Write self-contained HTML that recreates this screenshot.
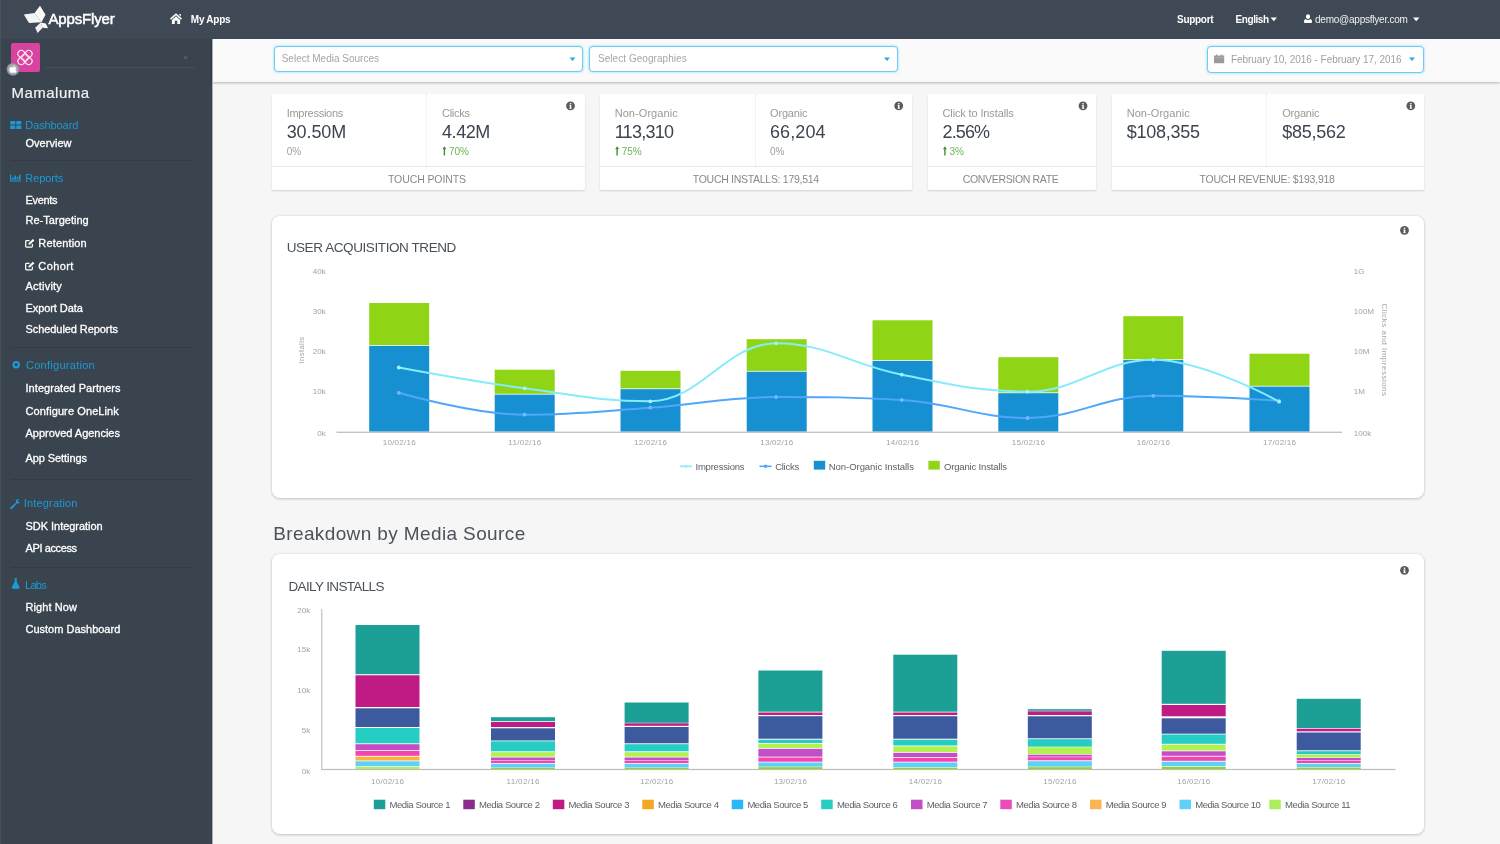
<!DOCTYPE html>
<html lang="en">
<head>
<meta charset="utf-8">
<title>AppsFlyer Dashboard - Mamaluma Overview</title>
<meta name="viewport" content="width=1500, initial-scale=1">
<style>
*{box-sizing:border-box;margin:0;padding:0}
html,body{width:1500px;height:844px;overflow:hidden;background:#f6f6f6}
body{font-family:"Liberation Sans",sans-serif;-webkit-font-smoothing:antialiased}
#app{will-change:transform;position:relative;width:1500px;height:844px;overflow:hidden;background:#f6f6f6}
#app div,#app header,#app aside,#app main,#app section,#app nav,#app ul,#app li,#app a,#app h1,#app h2,#app h3{position:absolute;display:block;list-style:none;text-decoration:none;font-weight:400}
.t{position:absolute;white-space:nowrap;display:block}
.i{position:absolute;display:block;overflow:visible}
.card{background:#fff;border-radius:1.5px;box-shadow:0 1px 2px rgba(0,0,0,.15)}
.panel{background:#fff;border-radius:7.5px;box-shadow:0 1px 3px rgba(0,0,0,.2),0 0 2px rgba(0,0,0,.1)}
.sel{background:#fff;border:1px solid #6dcdf3;border-radius:4px;box-shadow:0 0 2.5px rgba(90,200,245,.8)}
</style>
</head>
<body>
<div id="app">
<header style="left:0;top:0;width:1500px;height:39px;background:#3f4955">
<svg class="i" style="left:0px;top:0px;" width="60" height="39" viewBox="0 0 60 39" aria-hidden="true"><g fill="#fff">
<polygon points="34.6,13 40,5.8 45.5,14.8 41.5,22.2" opacity=".98"/>
<polygon points="23.8,14.5 34.6,13 41.5,22.2 29,23" opacity=".94"/>
<polygon points="40.6,22.6 45.8,23.4 48,28.2 42.6,27.8" opacity=".96"/>
<polygon points="35.2,27.8 40.6,22.6 42.6,27.8 37.6,33" opacity=".92"/>
</g></svg>
<a class="t logo" href="#" style="left:48.4px;top:10px;font-size:15px;line-height:18px;color:#fff;letter-spacing:-0.14px;-webkit-text-stroke:0.5px #fff;">AppsFlyer</a>
<svg class="i" style="left:170px;top:13px;" width="12" height="11" viewBox="0 0 12 11" aria-hidden="true"><path fill="#fff" d="M6 0.3 L12 5.6 L11 6.7 L6 2.3 L1 6.7 L0 5.6 Z M9.2 1 h1.6 v2.5 l-1.6 -1.4 Z M1.9 6.9 L6 3.3 L10.1 6.9 V11 H7.2 V7.8 H4.8 V11 H1.9 Z"/></svg>
<a class="t" href="#" style="left:190.8px;top:14px;font-size:10px;line-height:12px;color:#fff;letter-spacing:-0.25px;font-weight:700;">My Apps</a>
<a class="t" href="#" style="left:1177px;top:14px;font-size:10px;line-height:12px;color:#fff;letter-spacing:-0.29px;font-weight:700;">Support</a>
<a class="t" href="#" style="left:1235.6px;top:14px;font-size:10px;line-height:12px;color:#fff;letter-spacing:-0.45px;font-weight:700;">English</a>
<svg class="i" style="left:1270px;top:17px;" width="7" height="5" viewBox="0 0 7 5" aria-hidden="true"><g transform="translate(0.6 0.6)"><path fill="#fff" d="M0 0 H6.4 L3.2 3.6 Z"/></g></svg>
<svg class="i" style="left:1304px;top:14px;" width="8" height="9" viewBox="0 0 8 9" aria-hidden="true"><g transform="translate(0 0.3)"><path fill="#fff" d="M4 0 C5.3 0 6.1 1 6.1 2.3 C6.1 3.6 5.2 4.8 4 4.8 C2.8 4.8 1.9 3.6 1.9 2.3 C1.9 1 2.7 0 4 0 Z M1.7 4.7 C2.3 5.3 3.1 5.7 4 5.7 C4.9 5.7 5.7 5.3 6.3 4.7 C7.6 5 8 6.3 8 7.6 C8 8.3 7.5 8.7 6.9 8.7 H1.1 C0.5 8.7 0 8.3 0 7.6 C0 6.3 0.4 5 1.7 4.7 Z"/></g></svg>
<a class="t" href="#" style="left:1315px;top:14px;font-size:10px;line-height:12px;color:#eef0f2;letter-spacing:-0.23px;">demo@appsflyer.com</a>
<svg class="i" style="left:1413px;top:17px;" width="7" height="5" viewBox="0 0 7 5" aria-hidden="true"><g transform="translate(0 0.6)"><path fill="#fff" d="M0 0 H6.4 L3.2 3.6 Z"/></g></svg>
</header>
<aside style="left:0;top:39px;width:212px;height:805px;background:#3a444f">
<div style="left:11px;top:4px;width:28.6px;height:29px;background:#d8439f;border-radius:2px"></div>
<svg class="i" style="left:17px;top:10px;" width="16" height="17" viewBox="0 0 16 17" aria-hidden="true"><g transform="translate(0 0.5)"><g fill="none" stroke="#fff" stroke-width="1.15" opacity=".93">
<rect x="-8.6" y="-3.3" width="17.2" height="6.6" rx="3.3" transform="translate(8,8) rotate(45)"/>
<rect x="-8.6" y="-3.3" width="17.2" height="6.6" rx="3.3" transform="translate(8,8) rotate(-45)"/>
<rect x="-2.3" y="-2.3" width="4.6" height="4.6" transform="translate(8,8) rotate(45)" stroke-width=".9"/>
</g></g></svg>
<svg class="i" style="left:6px;top:23px;" width="14" height="15" viewBox="0 0 14 15" aria-hidden="true"><g transform="translate(0 0.3)"><circle cx="7" cy="7" r="6.4" fill="#8d9094"/><circle cx="7" cy="7" r="5.2" fill="#a9acaf"/>
<path fill="#fff" d="M7.1 4.6 C7.1 3.7 7.8 3 8.6 2.9 C8.7 3.8 7.9 4.6 7.1 4.6 Z M5.4 4.7 C6.1 4.7 6.5 5.1 7 5.1 C7.5 5.1 8 4.7 8.8 4.7 C9.4 4.7 10 5 10.4 5.6 C9.2 6.3 9.4 8.1 10.6 8.6 C10.3 9.4 9.6 10.7 8.8 10.7 C8.2 10.7 8 10.3 7.2 10.3 C6.4 10.3 6.2 10.7 5.6 10.7 C4.6 10.7 3.4 8.8 3.4 7.1 C3.4 5.6 4.4 4.7 5.4 4.7 Z"/></g></svg>
<div style="left:46px;top:28px;width:148px;height:1px;background:#47525e"></div>
<svg class="i" style="left:183px;top:17px;" width="5" height="4" viewBox="0 0 5 4" aria-hidden="true"><g transform="translate(0 0.5)"><path fill="#56616d" d="M0 0 H5 L2.5 3 Z"/></g></svg>
<h1 class="t" style="left:11.6px;top:45px;font-size:15px;line-height:18px;color:#f1f2f3;letter-spacing:0.46px;-webkit-text-stroke:0.2px #f1f2f3;">Mamaluma</h1>
<nav style="left:0;top:0;width:212px;height:805px">
<svg class="i" style="left:10px;top:82px;" width="12" height="8" viewBox="0 0 12 8" aria-hidden="true"><g transform="translate(0.3 0)"><g fill="#1c9ad6"><rect x="0" y="0" width="5" height="3.5"/><rect x="6" y="0" width="5" height="3.5"/><rect x="0" y="4.5" width="5" height="3.5"/><rect x="6" y="4.5" width="5" height="3.5"/></g></g></svg>
<h3 class="t" style="left:25.3px;top:80px;font-size:11px;line-height:13px;color:#1c9ad6;letter-spacing:-0.1px;">Dashboard</h3>
<a class="t" href="#" style="left:25.5px;top:98px;font-size:11px;line-height:13px;color:#fff;letter-spacing:0.02px;-webkit-text-stroke:0.3px #fff;">Overview</a>
<div style="left:11px;top:120.5px;width:181px;height:1px;background:#333c46"></div>
<svg class="i" style="left:10px;top:135px;" width="11" height="8" viewBox="0 0 11 8" aria-hidden="true"><g transform="translate(0 0.2)"><path fill="#1c9ad6" d="M0 0 H1.2 V6.3 H11 V7.4 H0 Z M2.1 5.6 V3.2 H3.7 V5.6 Z M4.4 5.6 V1.4 H6 V5.6 Z M6.7 5.6 V2.5 H8.3 V5.6 Z M9 5.6 V0.6 H10.6 V5.6 Z"/></g></svg>
<h3 class="t" style="left:25.3px;top:133px;font-size:11px;line-height:13px;color:#1c9ad6;letter-spacing:-0.09px;">Reports</h3>
<a class="t" href="#" style="left:25.5px;top:155px;font-size:11px;line-height:13px;color:#fff;letter-spacing:-0.33px;-webkit-text-stroke:0.3px #fff;">Events</a>
<a class="t" href="#" style="left:25.5px;top:175px;font-size:11px;line-height:13px;color:#fff;letter-spacing:0.02px;-webkit-text-stroke:0.3px #fff;">Re-Targeting</a>
<svg class="i" style="left:25px;top:199px;" width="10" height="10" viewBox="0 0 10 10" aria-hidden="true"><g transform="translate(0 0.7)"><g fill="none" stroke="#fff"><path stroke-width="1.25" d="M7.4 5.2 V7.6 Q7.4 8.4 6.6 8.4 H1.5 Q0.7 8.4 0.7 7.6 V2.7 Q0.7 1.9 1.5 1.9 H4.6"/><path d="M3.3 6 L3.7 4.2 L7.9 0.3 L9.4 1.8 L5.2 5.7 Z" fill="#fff" stroke="none"/></g></g></svg>
<a class="t" href="#" style="left:38.3px;top:198px;font-size:11px;line-height:13px;color:#fff;letter-spacing:0.16px;-webkit-text-stroke:0.3px #fff;">Retention</a>
<svg class="i" style="left:25px;top:222px;" width="10" height="10" viewBox="0 0 10 10" aria-hidden="true"><g transform="translate(0 0.5)"><g fill="none" stroke="#fff"><path stroke-width="1.25" d="M7.4 5.2 V7.6 Q7.4 8.4 6.6 8.4 H1.5 Q0.7 8.4 0.7 7.6 V2.7 Q0.7 1.9 1.5 1.9 H4.6"/><path d="M3.3 6 L3.7 4.2 L7.9 0.3 L9.4 1.8 L5.2 5.7 Z" fill="#fff" stroke="none"/></g></g></svg>
<a class="t" href="#" style="left:38.3px;top:221px;font-size:11px;line-height:13px;color:#fff;letter-spacing:0.4px;-webkit-text-stroke:0.3px #fff;">Cohort</a>
<a class="t" href="#" style="left:25.5px;top:241px;font-size:11px;line-height:13px;color:#fff;letter-spacing:0.21px;-webkit-text-stroke:0.3px #fff;">Activity</a>
<a class="t" href="#" style="left:25.5px;top:263px;font-size:11px;line-height:13px;color:#fff;letter-spacing:-0.08px;-webkit-text-stroke:0.3px #fff;">Export Data</a>
<a class="t" href="#" style="left:25.5px;top:284px;font-size:11px;line-height:13px;color:#fff;letter-spacing:-0.07px;-webkit-text-stroke:0.3px #fff;">Scheduled Reports</a>
<div style="left:11px;top:308px;width:181px;height:1px;background:#333c46"></div>
<svg class="i" style="left:12px;top:321px;" width="8" height="9" viewBox="0 0 8 9" aria-hidden="true"><g transform="translate(0.4 0.9)"><circle cx="3.8" cy="3.8" r="2.7" fill="none" stroke="#1c9ad6" stroke-width="2.1"/></g></svg>
<h3 class="t" style="left:26px;top:320px;font-size:11px;line-height:13px;color:#1c9ad6;letter-spacing:0.27px;">Configuration</h3>
<a class="t" href="#" style="left:25.5px;top:343px;font-size:11px;line-height:13px;color:#fff;letter-spacing:0.05px;-webkit-text-stroke:0.3px #fff;">Integrated Partners</a>
<a class="t" href="#" style="left:25.5px;top:366px;font-size:11px;line-height:13px;color:#fff;letter-spacing:0.1px;-webkit-text-stroke:0.3px #fff;">Configure OneLink</a>
<a class="t" href="#" style="left:25.5px;top:388px;font-size:11px;line-height:13px;color:#fff;letter-spacing:-0.02px;-webkit-text-stroke:0.3px #fff;">Approved Agencies</a>
<a class="t" href="#" style="left:25.5px;top:413px;font-size:11px;line-height:13px;color:#fff;letter-spacing:-0.08px;-webkit-text-stroke:0.3px #fff;">App Settings</a>
<div style="left:11px;top:440px;width:181px;height:1px;background:#333c46"></div>
<svg class="i" style="left:10px;top:460px;" width="11" height="11" viewBox="0 0 11 11" aria-hidden="true"><g transform="translate(0.2 0)"><path fill="#1c9ad6" d="M9 0.2 C7.4 -0.3 5.8 0.8 5.7 2.5 C5.7 2.9 5.7 3.2 5.9 3.6 L0.4 8.3 C-0.1 8.8 -0.1 9.5 0.3 9.9 C0.7 10.3 1.4 10.3 1.9 9.8 L6.6 4.4 C7.9 4.9 9.6 4.2 9.9 2.6 L8.3 3.2 L7.2 2.1 Z"/></g></svg>
<h3 class="t" style="left:23.7px;top:458px;font-size:11px;line-height:13px;color:#1c9ad6;letter-spacing:0.18px;">Integration</h3>
<a class="t" href="#" style="left:25.5px;top:481px;font-size:11px;line-height:13px;color:#fff;letter-spacing:-0.03px;-webkit-text-stroke:0.3px #fff;">SDK Integration</a>
<a class="t" href="#" style="left:25.5px;top:503px;font-size:11px;line-height:13px;color:#fff;letter-spacing:-0.39px;-webkit-text-stroke:0.3px #fff;">API access</a>
<div style="left:11px;top:527.5px;width:181px;height:1px;background:#333c46"></div>
<svg class="i" style="left:11px;top:539px;" width="9" height="11" viewBox="0 0 9 11" aria-hidden="true"><g transform="translate(0.7 0.2)"><path fill="#1c9ad6" d="M2.6 0 H5.4 V0.9 H5 V3.4 L7.8 8.9 C8.2 9.7 7.7 10.5 6.8 10.5 H1.2 C0.3 10.5 -0.2 9.7 0.2 8.9 L3 3.4 V0.9 H2.6 Z"/></g></svg>
<h3 class="t" style="left:25px;top:540px;font-size:11px;line-height:13px;color:#1c9ad6;letter-spacing:-0.72px;">Labs</h3>
<a class="t" href="#" style="left:25.5px;top:562px;font-size:11px;line-height:13px;color:#fff;letter-spacing:0.09px;-webkit-text-stroke:0.3px #fff;">Right Now</a>
<a class="t" href="#" style="left:25.5px;top:584px;font-size:11px;line-height:13px;color:#fff;-webkit-text-stroke:0.3px #fff;">Custom Dashboard</a>
</nav>
</aside>
<div class="filters" style="left:212px;top:39px;width:1288px;height:43px;background:#fafafa;box-shadow:0 1px 2.5px rgba(0,0,0,.27)">
<div class="sel" style="left:62px;top:7px;width:309px;height:26px;"></div>
<span class="t" style="left:69.7px;top:14px;font-size:10px;line-height:12px;color:#a6a6a6;">Select Media Sources</span>
<svg class="i" style="left:357px;top:18px;" width="7" height="4" viewBox="0 0 7 4" aria-hidden="true"><g transform="translate(0.5 0.5)"><path fill="#29abe2" d="M0 0 H6 L3 3.4 Z"/></g></svg>
<div class="sel" style="left:377px;top:7px;width:309px;height:26px;"></div>
<span class="t" style="left:386px;top:14px;font-size:10px;line-height:12px;color:#a6a6a6;letter-spacing:0.05px;">Select Geographies</span>
<svg class="i" style="left:672px;top:18px;" width="6" height="4" viewBox="0 0 6 4" aria-hidden="true"><g transform="translate(0 0.5)"><path fill="#29abe2" d="M0 0 H6 L3 3.4 Z"/></g></svg>
<div class="sel" style="left:995px;top:7px;width:217px;height:27px;"></div>
<svg class="i" style="left:1002px;top:15px;" width="11" height="10" viewBox="0 0 11 10" aria-hidden="true"><g transform="translate(0 0.6)"><path fill="#9a9a9a" d="M0 1 H2 V0 H3.3 V1 H6.9 V0 H8.2 V1 H10.2 V8.6 H0 Z"/><path fill="#c9c9c9" d="M0.9 3 H9.3 V3.5 H0.9 Z"/></g></svg>
<span class="t" style="left:1019px;top:15px;font-size:10px;line-height:12px;color:#a0a0a0;letter-spacing:-0.05px;">February 10, 2016 - February 17, 2016</span>
<svg class="i" style="left:1197px;top:18px;" width="6" height="4" viewBox="0 0 6 4" aria-hidden="true"><g transform="translate(0 0.6)"><path fill="#29abe2" d="M0 0 H6 L3 3.4 Z"/></g></svg>
</div>
<main style="left:212px;top:82px;width:1288px;height:762px">
<section class="card" style="left:60px;top:12px;width:313px;height:96px">
<div style="left:154px;top:0px;width:0px;height:72px;border-left:1px dotted #e8e8e8"></div>
<div style="left:0px;top:72px;width:313px;height:1px;background:#e8e8e8"></div>
<span class="t lab" style="left:14.7px;top:13px;font-size:11px;line-height:13px;color:#999;letter-spacing:-0.27px;">Impressions</span>
<span class="t val" style="left:14.7px;top:27px;font-size:18px;line-height:22px;color:#3d4551;letter-spacing:-0.09px;">30.50M</span>
<span class="t pct" style="left:14.7px;top:52px;font-size:10px;line-height:12px;color:#a0a0a0;">0%</span>
<span class="t lab" style="left:170px;top:13px;font-size:11px;line-height:13px;color:#999;letter-spacing:-0.27px;">Clicks</span>
<span class="t val" style="left:170px;top:27px;font-size:18px;line-height:22px;color:#3d4551;letter-spacing:-0.43px;">4.42M</span>
<svg class="i" style="left:170px;top:52px;" width="5" height="10" viewBox="0 0 5 10" aria-hidden="true"><g transform="translate(0.4 0.2)"><path fill="#3f8f2f" d="M2 0 L4 3.1 H2.7 V9.4 H1.3 V3.1 H0 Z"/></g></svg>
<span class="t pct" style="left:177px;top:52px;font-size:10px;line-height:12px;color:#6cb356;">70%</span>
<svg class="i" style="left:294px;top:7px;" width="9" height="10" viewBox="0 0 9 10" aria-hidden="true"><g transform="translate(0.1 0.4)"><circle cx="4.4" cy="4.4" r="4.4" fill="#5a5a5a"/><rect x="3.7" y="3.7" width="1.5" height="3.3" fill="#fff"/><rect x="3.7" y="1.7" width="1.5" height="1.3" fill="#fff"/><rect x="3.2" y="3.7" width="1" height=".7" fill="#fff"/><rect x="3.2" y="6.5" width="2.5" height=".7" fill="#fff"/></g></svg>
<span class="t foot" style="left:116px;top:79px;font-size:10.5px;line-height:13px;color:#888;letter-spacing:-0.1px;">TOUCH POINTS</span>
</section>
<section class="card" style="left:388px;top:12px;width:312px;height:96px">
<div style="left:155px;top:0px;width:0px;height:72px;border-left:1px dotted #e8e8e8"></div>
<div style="left:0px;top:72px;width:312px;height:1px;background:#e8e8e8"></div>
<span class="t lab" style="left:14.7px;top:13px;font-size:11px;line-height:13px;color:#999;letter-spacing:0.06px;">Non-Organic</span>
<span class="t val" style="left:14.7px;top:27px;font-size:18px;line-height:22px;color:#3d4551;letter-spacing:-0.74px;">113,310</span>
<svg class="i" style="left:15px;top:52px;" width="5" height="10" viewBox="0 0 5 10" aria-hidden="true"><g transform="translate(0.1 0.2)"><path fill="#3f8f2f" d="M2 0 L4 3.1 H2.7 V9.4 H1.3 V3.1 H0 Z"/></g></svg>
<span class="t pct" style="left:21.7px;top:52px;font-size:10px;line-height:12px;color:#6cb356;">75%</span>
<span class="t lab" style="left:170px;top:13px;font-size:11px;line-height:13px;color:#999;letter-spacing:-0.17px;">Organic</span>
<span class="t val" style="left:170px;top:27px;font-size:18px;line-height:22px;color:#3d4551;letter-spacing:0.09px;">66,204</span>
<span class="t pct" style="left:170px;top:52px;font-size:10px;line-height:12px;color:#a0a0a0;">0%</span>
<svg class="i" style="left:294px;top:7px;" width="10" height="10" viewBox="0 0 10 10" aria-hidden="true"><g transform="translate(0.3 0.4)"><circle cx="4.4" cy="4.4" r="4.4" fill="#5a5a5a"/><rect x="3.7" y="3.7" width="1.5" height="3.3" fill="#fff"/><rect x="3.7" y="1.7" width="1.5" height="1.3" fill="#fff"/><rect x="3.2" y="3.7" width="1" height=".7" fill="#fff"/><rect x="3.2" y="6.5" width="2.5" height=".7" fill="#fff"/></g></svg>
<span class="t foot" style="left:92.8px;top:79px;font-size:10.5px;line-height:13px;color:#888;letter-spacing:-0.29px;">TOUCH INSTALLS: 179,514</span>
</section>
<section class="card" style="left:716px;top:12px;width:168px;height:96px">
<div style="left:0px;top:72px;width:168px;height:1px;background:#e8e8e8"></div>
<span class="t lab" style="left:14.5px;top:13px;font-size:11px;line-height:13px;color:#999;letter-spacing:-0.13px;">Click to Installs</span>
<span class="t val" style="left:14.5px;top:27px;font-size:18px;line-height:22px;color:#3d4551;letter-spacing:-0.88px;">2.56%</span>
<svg class="i" style="left:14px;top:52px;" width="5" height="10" viewBox="0 0 5 10" aria-hidden="true"><g transform="translate(0.9 0.2)"><path fill="#3f8f2f" d="M2 0 L4 3.1 H2.7 V9.4 H1.3 V3.1 H0 Z"/></g></svg>
<span class="t pct" style="left:21.5px;top:52px;font-size:10px;line-height:12px;color:#6cb356;">3%</span>
<svg class="i" style="left:150px;top:7px;" width="10" height="10" viewBox="0 0 10 10" aria-hidden="true"><g transform="translate(0.6 0.4)"><circle cx="4.4" cy="4.4" r="4.4" fill="#5a5a5a"/><rect x="3.7" y="3.7" width="1.5" height="3.3" fill="#fff"/><rect x="3.7" y="1.7" width="1.5" height="1.3" fill="#fff"/><rect x="3.2" y="3.7" width="1" height=".7" fill="#fff"/><rect x="3.2" y="6.5" width="2.5" height=".7" fill="#fff"/></g></svg>
<span class="t foot" style="left:34.8px;top:79px;font-size:10.5px;line-height:13px;color:#888;letter-spacing:-0.34px;">CONVERSION RATE</span>
</section>
<section class="card" style="left:900px;top:12px;width:312px;height:96px">
<div style="left:154px;top:0px;width:0px;height:72px;border-left:1px dotted #e8e8e8"></div>
<div style="left:0px;top:72px;width:312px;height:1px;background:#e8e8e8"></div>
<span class="t lab" style="left:14.7px;top:13px;font-size:11px;line-height:13px;color:#999;letter-spacing:0.06px;">Non-Organic</span>
<span class="t val" style="left:14.7px;top:27px;font-size:18px;line-height:22px;color:#3d4551;letter-spacing:-0.25px;">$108,355</span>
<span class="t lab" style="left:170.2px;top:13px;font-size:11px;line-height:13px;color:#999;letter-spacing:-0.2px;">Organic</span>
<span class="t val" style="left:170.2px;top:27px;font-size:18px;line-height:22px;color:#3d4551;letter-spacing:-0.24px;">$85,562</span>
<svg class="i" style="left:294px;top:7px;" width="10" height="10" viewBox="0 0 10 10" aria-hidden="true"><g transform="translate(0.4 0.4)"><circle cx="4.4" cy="4.4" r="4.4" fill="#5a5a5a"/><rect x="3.7" y="3.7" width="1.5" height="3.3" fill="#fff"/><rect x="3.7" y="1.7" width="1.5" height="1.3" fill="#fff"/><rect x="3.2" y="3.7" width="1" height=".7" fill="#fff"/><rect x="3.2" y="6.5" width="2.5" height=".7" fill="#fff"/></g></svg>
<span class="t foot" style="left:87.55px;top:79px;font-size:10.5px;line-height:13px;color:#888;letter-spacing:-0.23px;">TOUCH REVENUE: $193,918</span>
</section>
<section class="panel" style="left:60px;top:134px;width:1152px;height:282px">
<h2 class="t" style="left:14.7px;top:24px;font-size:13.5px;line-height:16px;color:#4a5058;letter-spacing:-0.41px;">USER ACQUISITION TREND</h2>
<svg class="i" style="left:1128px;top:9px;" width="9" height="10" viewBox="0 0 9 10" aria-hidden="true"><g transform="translate(0.1 0.9)"><circle cx="4.4" cy="4.4" r="4.4" fill="#5a5a5a"/><rect x="3.7" y="3.7" width="1.5" height="3.3" fill="#fff"/><rect x="3.7" y="1.7" width="1.5" height="1.3" fill="#fff"/><rect x="3.2" y="3.7" width="1" height=".7" fill="#fff"/><rect x="3.2" y="6.5" width="2.5" height=".7" fill="#fff"/></g></svg>
<svg class="i" style="left:0;top:0" width="1152" height="282" viewBox="0 0 1152 282"><rect x="97.2" y="87" width="60" height="42.1" fill="#8fd516"/><rect x="97.2" y="129.9" width="60" height="85.8" fill="#1790d2"/><rect x="222.7" y="153.7" width="60" height="24.1" fill="#8fd516"/><rect x="222.7" y="178.6" width="60" height="37.1" fill="#1790d2"/><rect x="348.5" y="154.8" width="60" height="17.6" fill="#8fd516"/><rect x="348.5" y="173.2" width="60" height="42.5" fill="#1790d2"/><rect x="474.7" y="123.2" width="60" height="31.7" fill="#8fd516"/><rect x="474.7" y="155.7" width="60" height="60" fill="#1790d2"/><rect x="600.5" y="104.3" width="60" height="39.8" fill="#8fd516"/><rect x="600.5" y="144.9" width="60" height="70.8" fill="#1790d2"/><rect x="726.3" y="141.2" width="60" height="35.2" fill="#8fd516"/><rect x="726.3" y="177.2" width="60" height="38.5" fill="#1790d2"/><rect x="851.3" y="100.2" width="60" height="43.1" fill="#8fd516"/><rect x="851.3" y="144.1" width="60" height="71.6" fill="#1790d2"/><rect x="977.5" y="137.7" width="60" height="32.1" fill="#8fd516"/><rect x="977.5" y="170.6" width="60" height="45.1" fill="#1790d2"/><rect x="64.5" y="215.6" width="1005.5" height="1.4" fill="#c4c4c4"/><path d="M126.8 176.8 C126.8 176.8 202.28 198.7 252.6 198.7 C302.88 198.7 328.02 195.24 378.3 191.7 C428.62 188.16 453.78 181 504.1 181 C554.38 181 579.52 181 629.8 184 C680.12 187 705.28 202 755.6 202 C805.88 202 831.02 179.8 881.3 179.8 C931.62 179.8 1007.1 184.8 1007.1 184.8" fill="none" stroke="#4fa6fb" stroke-width="2" stroke-linecap="round" stroke-linejoin="round"/><path d="M126.8 151.5 C126.8 151.5 202.28 165.54 252.6 172.3 C302.88 179.06 328.02 185.3 378.3 185.3 C428.62 185.3 453.78 127.3 504.1 127.3 C554.38 127.3 579.52 149.02 629.8 158.7 C680.12 168.38 705.28 175.7 755.6 175.7 C805.88 175.7 831.02 143.7 881.3 143.7 C931.62 143.7 1007.1 185.7 1007.1 185.7" fill="none" stroke="#86ecfc" stroke-width="2" stroke-linecap="round" stroke-linejoin="round"/><circle cx="126.8" cy="176.8" r="1.9" fill="#74b9fc"/><circle cx="252.6" cy="198.7" r="1.9" fill="#74b9fc"/><circle cx="378.3" cy="191.7" r="1.9" fill="#74b9fc"/><circle cx="504.1" cy="181" r="1.9" fill="#74b9fc"/><circle cx="629.8" cy="184" r="1.9" fill="#74b9fc"/><circle cx="755.6" cy="202" r="1.9" fill="#74b9fc"/><circle cx="881.3" cy="179.8" r="1.9" fill="#74b9fc"/><circle cx="1007.1" cy="184.8" r="1.9" fill="#74b9fc"/><circle cx="126.8" cy="151.5" r="1.9" fill="#a6f2fd"/><circle cx="252.6" cy="172.3" r="1.9" fill="#a6f2fd"/><circle cx="378.3" cy="185.3" r="1.9" fill="#a6f2fd"/><circle cx="504.1" cy="127.3" r="1.9" fill="#a6f2fd"/><circle cx="629.8" cy="158.7" r="1.9" fill="#a6f2fd"/><circle cx="755.6" cy="175.7" r="1.9" fill="#a6f2fd"/><circle cx="881.3" cy="143.7" r="1.9" fill="#a6f2fd"/><circle cx="1007.1" cy="185.7" r="1.9" fill="#a6f2fd"/><path d="M408 250.3 H420" stroke="#86ecfc" stroke-width="1.6"/><circle cx="414" cy="250.3" r="1.6" fill="#9cf0fc"/><path d="M487.5 250.3 H499.5" stroke="#4fa6fb" stroke-width="1.6"/><circle cx="493.5" cy="250.3" r="1.7" fill="#4fa6fb"/><rect x="541.8" y="244.8" width="11.4" height="8.8" fill="#1790d2"/><rect x="656.4" y="244.8" width="11.4" height="8.8" fill="#8fd516"/></svg>
<span class="t" style="left:40.8px;top:51px;font-size:8px;line-height:10px;color:#a2a2a2;">40k</span>
<span class="t" style="left:40.8px;top:91px;font-size:8px;line-height:10px;color:#a2a2a2;">30k</span>
<span class="t" style="left:40.8px;top:131px;font-size:8px;line-height:10px;color:#a2a2a2;">20k</span>
<span class="t" style="left:40.8px;top:171px;font-size:8px;line-height:10px;color:#a2a2a2;">10k</span>
<span class="t" style="left:45.25px;top:213px;font-size:8px;line-height:10px;color:#a2a2a2;">0k</span>
<span class="t" style="left:1081.8px;top:51px;font-size:8px;line-height:10px;color:#a2a2a2;">1G</span>
<span class="t" style="left:1081.8px;top:91px;font-size:8px;line-height:10px;color:#a2a2a2;">100M</span>
<span class="t" style="left:1081.8px;top:131px;font-size:8px;line-height:10px;color:#a2a2a2;">10M</span>
<span class="t" style="left:1081.8px;top:171px;font-size:8px;line-height:10px;color:#a2a2a2;">1M</span>
<span class="t" style="left:1081.8px;top:213px;font-size:8px;line-height:10px;color:#a2a2a2;">100k</span>
<span class="t" style="left:110.7px;top:222px;font-size:8px;line-height:10px;color:#a2a2a2;letter-spacing:0.27px;">10/02/16</span>
<span class="t" style="left:236.2px;top:222px;font-size:8px;line-height:10px;color:#a2a2a2;letter-spacing:0.35px;">11/02/16</span>
<span class="t" style="left:362px;top:222px;font-size:8px;line-height:10px;color:#a2a2a2;letter-spacing:0.27px;">12/02/16</span>
<span class="t" style="left:488.2px;top:222px;font-size:8px;line-height:10px;color:#a2a2a2;letter-spacing:0.27px;">13/02/16</span>
<span class="t" style="left:614px;top:222px;font-size:8px;line-height:10px;color:#a2a2a2;letter-spacing:0.27px;">14/02/16</span>
<span class="t" style="left:739.8px;top:222px;font-size:8px;line-height:10px;color:#a2a2a2;letter-spacing:0.27px;">15/02/16</span>
<span class="t" style="left:864.8px;top:222px;font-size:8px;line-height:10px;color:#a2a2a2;letter-spacing:0.27px;">16/02/16</span>
<span class="t" style="left:991px;top:222px;font-size:8px;line-height:10px;color:#a2a2a2;letter-spacing:0.27px;">17/02/16</span>
<span class="t" style="left:28.6px;top:134.3px;font-size:7.5px;line-height:9px;color:#a5a5a5;letter-spacing:.45px;transform:translate(-50%,-50%) rotate(-90deg)">Installs</span>
<span class="t" style="left:1111.6px;top:134.3px;font-size:8px;line-height:9px;color:#a5a5a5;letter-spacing:0.49px;transform:translate(-50%,-50%) rotate(90deg)">Clicks and Impressions</span>
<span class="t" style="left:423.5px;top:245px;font-size:9.5px;line-height:11px;color:#5a5f66;letter-spacing:-0.22px;">Impressions</span>
<span class="t" style="left:503.2px;top:245px;font-size:9.5px;line-height:11px;color:#5a5f66;letter-spacing:-0.27px;">Clicks</span>
<span class="t" style="left:556.8px;top:245px;font-size:9.5px;line-height:11px;color:#5a5f66;letter-spacing:-0.05px;">Non-Organic Installs</span>
<span class="t" style="left:672px;top:245px;font-size:9.5px;line-height:11px;color:#5a5f66;letter-spacing:-0.16px;">Organic Installs</span>
</section>
<h2 class="t" style="left:61.2px;top:440px;font-size:19px;line-height:23px;color:#4c525b;letter-spacing:0.38px;">Breakdown by Media Source</h2>
<section class="panel" style="left:60px;top:472px;width:1152px;height:280px">
<h2 class="t" style="left:16.5px;top:25px;font-size:13.5px;line-height:16px;color:#4a5058;letter-spacing:-0.64px;">DAILY INSTALLS</h2>
<svg class="i" style="left:1128px;top:11px;" width="9" height="10" viewBox="0 0 9 10" aria-hidden="true"><g transform="translate(0.1 0.9)"><circle cx="4.4" cy="4.4" r="4.4" fill="#5a5a5a"/><rect x="3.7" y="3.7" width="1.5" height="3.3" fill="#fff"/><rect x="3.7" y="1.7" width="1.5" height="1.3" fill="#fff"/><rect x="3.2" y="3.7" width="1" height=".7" fill="#fff"/><rect x="3.2" y="6.5" width="2.5" height=".7" fill="#fff"/></g></svg>
<svg class="i" style="left:0;top:0" width="1152" height="280" viewBox="0 0 1152 280"><rect x="83.5" y="71" width="64" height="49.2" fill="#1ca095"/><rect x="83.5" y="121.3" width="64" height="31.7" fill="#c01a84"/><rect x="83.5" y="154.3" width="64" height="18.7" fill="#3d5a9e"/><rect x="83.5" y="174" width="64" height="15.3" fill="#25cdc3"/><rect x="83.5" y="190.2" width="64" height="5.8" fill="#c24fc6"/><rect x="83.5" y="196.8" width="64" height="5" fill="#f444b0"/><rect x="83.5" y="202.7" width="64" height="3.8" fill="#fbb13c"/><rect x="83.5" y="207.3" width="64" height="5" fill="#5fd0fa"/><rect x="83.5" y="213" width="64" height="2.2" fill="#b3f153"/><rect x="219" y="163.2" width="64" height="4" fill="#1ca095"/><rect x="219" y="168" width="64" height="5" fill="#c01a84"/><rect x="219" y="174.3" width="64" height="12.2" fill="#3d5a9e"/><rect x="219" y="187.3" width="64" height="10" fill="#25cdc3"/><rect x="219" y="198.2" width="64" height="4.5" fill="#b3f153"/><rect x="219" y="203.5" width="64" height="2.5" fill="#c24fc6"/><rect x="219" y="206.5" width="64" height="2.5" fill="#f444b0"/><rect x="219" y="209.7" width="64" height="3.8" fill="#5fd0fa"/><rect x="219" y="213.8" width="64" height="1.6" fill="#8fd811"/><rect x="352.6" y="148.5" width="64" height="20.3" fill="#1ca095"/><rect x="352.6" y="169.3" width="64" height="2.5" fill="#c01a84"/><rect x="352.6" y="173" width="64" height="16.3" fill="#3d5a9e"/><rect x="352.6" y="190.2" width="64" height="7.1" fill="#25cdc3"/><rect x="352.6" y="198.2" width="64" height="4.5" fill="#b3f153"/><rect x="352.6" y="203.5" width="64" height="2.5" fill="#c24fc6"/><rect x="352.6" y="206.5" width="64" height="2.5" fill="#f444b0"/><rect x="352.6" y="209.7" width="64" height="3.8" fill="#5fd0fa"/><rect x="352.6" y="213.8" width="64" height="1.6" fill="#8fd811"/><rect x="486.4" y="116.5" width="64" height="41.2" fill="#1ca095"/><rect x="486.4" y="158.5" width="64" height="2.5" fill="#c01a84"/><rect x="486.4" y="162.2" width="64" height="22.5" fill="#3d5a9e"/><rect x="486.4" y="185.7" width="64" height="3.3" fill="#25cdc3"/><rect x="486.4" y="189.8" width="64" height="4.2" fill="#b3f153"/><rect x="486.4" y="194.8" width="64" height="7.9" fill="#c24fc6"/><rect x="486.4" y="203.5" width="64" height="4.2" fill="#f444b0"/><rect x="486.4" y="208.5" width="64" height="4.2" fill="#5fd0fa"/><rect x="486.4" y="213.2" width="64" height="2" fill="#8fd811"/><rect x="621.3" y="100.7" width="64" height="57" fill="#1ca095"/><rect x="621.3" y="158.5" width="64" height="2.5" fill="#c01a84"/><rect x="621.3" y="162.2" width="64" height="22.5" fill="#3d5a9e"/><rect x="621.3" y="185.7" width="64" height="5.8" fill="#25cdc3"/><rect x="621.3" y="192.3" width="64" height="5.7" fill="#b3f153"/><rect x="621.3" y="198.8" width="64" height="4.2" fill="#c24fc6"/><rect x="621.3" y="203.8" width="64" height="3.9" fill="#f444b0"/><rect x="621.3" y="208.5" width="64" height="4.7" fill="#5fd0fa"/><rect x="621.3" y="213.7" width="64" height="1.5" fill="#8fd811"/><rect x="755.8" y="155.2" width="64" height="1.6" fill="#1ca095"/><rect x="755.8" y="157.3" width="64" height="3.7" fill="#c01a84"/><rect x="755.8" y="162.3" width="64" height="22" fill="#3d5a9e"/><rect x="755.8" y="185.2" width="64" height="7.5" fill="#25cdc3"/><rect x="755.8" y="193.2" width="64" height="7" fill="#b3f153"/><rect x="755.8" y="200.7" width="64" height="2" fill="#c24fc6"/><rect x="755.8" y="203.2" width="64" height="3.1" fill="#f444b0"/><rect x="755.8" y="207.2" width="64" height="5.5" fill="#5fd0fa"/><rect x="755.8" y="213.2" width="64" height="2" fill="#8fd811"/><rect x="889.7" y="96.8" width="64" height="53" fill="#1ca095"/><rect x="889.7" y="151" width="64" height="11.3" fill="#c01a84"/><rect x="889.7" y="164.3" width="64" height="15.4" fill="#3d5a9e"/><rect x="889.7" y="180.5" width="64" height="9.3" fill="#25cdc3"/><rect x="889.7" y="190.7" width="64" height="5.8" fill="#b3f153"/><rect x="889.7" y="197.3" width="64" height="4.5" fill="#c24fc6"/><rect x="889.7" y="202.7" width="64" height="4.1" fill="#f444b0"/><rect x="889.7" y="207.7" width="64" height="4.6" fill="#5fd0fa"/><rect x="889.7" y="213" width="64" height="2.2" fill="#8fd811"/><rect x="1024.7" y="144.8" width="64" height="29.2" fill="#1ca095"/><rect x="1024.7" y="174.7" width="64" height="2.6" fill="#c01a84"/><rect x="1024.7" y="178.5" width="64" height="17.8" fill="#3d5a9e"/><rect x="1024.7" y="197.2" width="64" height="3" fill="#25cdc3"/><rect x="1024.7" y="200.7" width="64" height="2.8" fill="#b3f153"/><rect x="1024.7" y="204" width="64" height="2.3" fill="#c24fc6"/><rect x="1024.7" y="206.8" width="64" height="2.2" fill="#f444b0"/><rect x="1024.7" y="209.7" width="64" height="3.3" fill="#5fd0fa"/><rect x="1024.7" y="213.5" width="64" height="1.7" fill="#8fd811"/><rect x="49.2" y="55" width="1.1" height="161" fill="#bdbdbd"/><rect x="49.2" y="214.9" width="1074.3" height="1.2" fill="#bdbdbd"/><rect x="101.8" y="245.7" width="11.5" height="9.5" fill="#1ca095"/><rect x="191.3" y="245.7" width="11.5" height="9.5" fill="#8b2c8c"/><rect x="280.8" y="245.7" width="11.5" height="9.5" fill="#c01a84"/><rect x="370.3" y="245.7" width="11.5" height="9.5" fill="#f5a623"/><rect x="459.7" y="245.7" width="11.5" height="9.5" fill="#2bb7f7"/><rect x="549.2" y="245.7" width="11.5" height="9.5" fill="#25cdc3"/><rect x="639" y="245.7" width="11.5" height="9.5" fill="#c24fc6"/><rect x="728.3" y="245.7" width="11.5" height="9.5" fill="#ea4dba"/><rect x="818" y="245.7" width="11.5" height="9.5" fill="#f9b552"/><rect x="907.5" y="245.7" width="11.5" height="9.5" fill="#5fd0fa"/><rect x="997.3" y="245.7" width="11.5" height="9.5" fill="#a9f05c"/></svg>
<span class="t" style="left:25.3px;top:52px;font-size:8px;line-height:10px;color:#a2a2a2;">20k</span>
<span class="t" style="left:25.3px;top:91px;font-size:8px;line-height:10px;color:#a2a2a2;">15k</span>
<span class="t" style="left:25.3px;top:132px;font-size:8px;line-height:10px;color:#a2a2a2;">10k</span>
<span class="t" style="left:29.75px;top:172px;font-size:8px;line-height:10px;color:#a2a2a2;">5k</span>
<span class="t" style="left:29.75px;top:213px;font-size:8px;line-height:10px;color:#a2a2a2;">0k</span>
<span class="t" style="left:99px;top:223px;font-size:8px;line-height:10px;color:#a2a2a2;letter-spacing:0.27px;">10/02/16</span>
<span class="t" style="left:234.5px;top:223px;font-size:8px;line-height:10px;color:#a2a2a2;letter-spacing:0.35px;">11/02/16</span>
<span class="t" style="left:368.1px;top:223px;font-size:8px;line-height:10px;color:#a2a2a2;letter-spacing:0.27px;">12/02/16</span>
<span class="t" style="left:501.9px;top:223px;font-size:8px;line-height:10px;color:#a2a2a2;letter-spacing:0.27px;">13/02/16</span>
<span class="t" style="left:636.8px;top:223px;font-size:8px;line-height:10px;color:#a2a2a2;letter-spacing:0.27px;">14/02/16</span>
<span class="t" style="left:771.3px;top:223px;font-size:8px;line-height:10px;color:#a2a2a2;letter-spacing:0.27px;">15/02/16</span>
<span class="t" style="left:905.2px;top:223px;font-size:8px;line-height:10px;color:#a2a2a2;letter-spacing:0.27px;">16/02/16</span>
<span class="t" style="left:1040.2px;top:223px;font-size:8px;line-height:10px;color:#a2a2a2;letter-spacing:0.27px;">17/02/16</span>
<span class="t" style="left:117.5px;top:245px;font-size:9.5px;line-height:11px;color:#5a5f66;letter-spacing:-0.43px;">Media Source 1</span>
<span class="t" style="left:207px;top:245px;font-size:9.5px;line-height:11px;color:#5a5f66;letter-spacing:-0.43px;">Media Source 2</span>
<span class="t" style="left:296.5px;top:245px;font-size:9.5px;line-height:11px;color:#5a5f66;letter-spacing:-0.43px;">Media Source 3</span>
<span class="t" style="left:386px;top:245px;font-size:9.5px;line-height:11px;color:#5a5f66;letter-spacing:-0.43px;">Media Source 4</span>
<span class="t" style="left:475.4px;top:245px;font-size:9.5px;line-height:11px;color:#5a5f66;letter-spacing:-0.43px;">Media Source 5</span>
<span class="t" style="left:564.9px;top:245px;font-size:9.5px;line-height:11px;color:#5a5f66;letter-spacing:-0.43px;">Media Source 6</span>
<span class="t" style="left:654.7px;top:245px;font-size:9.5px;line-height:11px;color:#5a5f66;letter-spacing:-0.43px;">Media Source 7</span>
<span class="t" style="left:744px;top:245px;font-size:9.5px;line-height:11px;color:#5a5f66;letter-spacing:-0.43px;">Media Source 8</span>
<span class="t" style="left:833.7px;top:245px;font-size:9.5px;line-height:11px;color:#5a5f66;letter-spacing:-0.43px;">Media Source 9</span>
<span class="t" style="left:923.2px;top:245px;font-size:9.5px;line-height:11px;color:#5a5f66;letter-spacing:-0.44px;">Media Source 10</span>
<span class="t" style="left:1013px;top:245px;font-size:9.5px;line-height:11px;color:#5a5f66;letter-spacing:-0.39px;">Media Source 11</span>
</section>
</main>
<div class="edge" style="left:0px;top:0px;width:1px;height:844px;background:#4a5562;opacity:.75"></div>
<div class="edge" style="left:212px;top:39px;width:1px;height:805px;background:#a9aeb4"></div>
</div>
</body>
</html>
